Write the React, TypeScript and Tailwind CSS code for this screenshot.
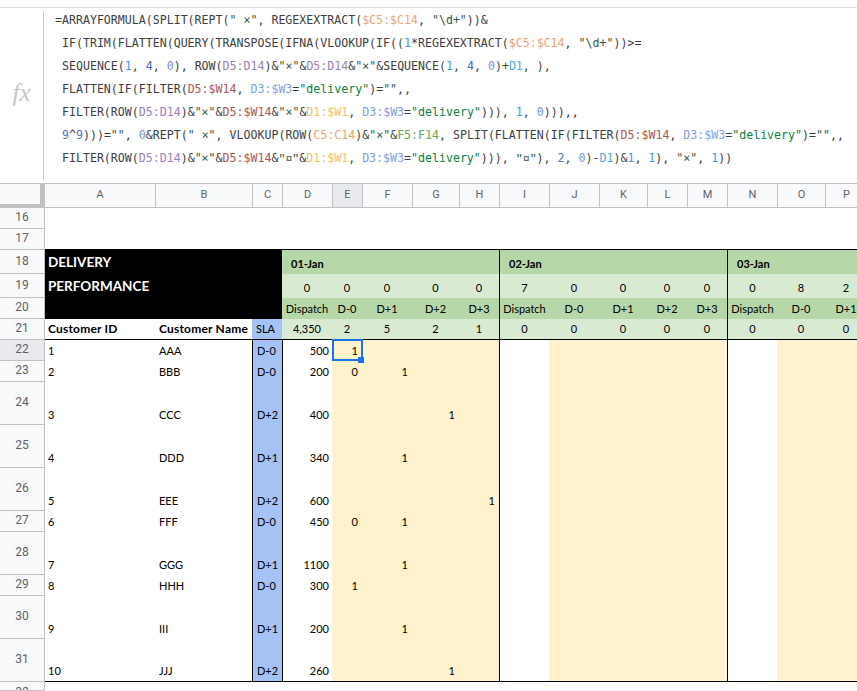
const headerColumns = ['A', 'B', 'C', 'D', 'E', 'F', 'G', 'H', 'I', 'J', 'K', 'L', 'M', 'N', 'O', 'P'];

const orange = 'text-[#f5a26f]';
const purple = 'text-[#9a80bd]';
const sky = 'text-[#56a7dc]';
const red = 'text-[#b0555a]';
const blue = 'text-[#7d9ff0]';
const amber = 'text-[#f3c267]';
const lime = 'text-[#6aa84f]';
const green = 'text-[#0b8043]';
const str = 'text-[#35594a]';
const box = "text-[#35594a] font-['Liberation_Mono',monospace]";
const n1 = 'text-[#3f9bd6]';
const n4 = 'text-[#4f63c6]';
const n0 = 'text-[#7f8fe0]';
const n2 = 'text-[#5b6fd0]';

type Token = string | [string, string];

const formula: Token[][] = [
  ['=ARRAYFORMULA(SPLIT(REPT(', ['" ×"', str], ', REGEXEXTRACT(', ['$C5:$C14', orange], ', ', ['"\\d+"', str], '))&'],
  [' IF(TRIM(FLATTEN(QUERY(TRANSPOSE(IFNA(VLOOKUP(IF((', ['1', n1], '*REGEXEXTRACT(', ['$C5:$C14', orange], ', ', ['"\\d+"', str], '))>='],
  [' SEQUENCE(', ['1', n1], ', ', ['4', n4], ', ', ['0', n0], '), ROW(', ['D5:D14', purple], ')&', ['"×"', str], '&', ['D5:D14', purple], '&', ['"×"', str], '&SEQUENCE(', ['1', n1], ', ', ['4', n4], ', ', ['0', n0], ')+', ['D1', sky], ', ),'],
  [' FLATTEN(IF(FILTER(', ['D5:$W14', red], ', ', ['D3:$W3', blue], '=', ['"delivery"', green], ')=', ['""', str], ',,'],
  [' FILTER(ROW(', ['D5:D14', purple], ')&', ['"×"', str], '&', ['D5:$W14', red], '&', ['"×"', str], '&', ['D1:$W1', amber], ', ', ['D3:$W3', blue], '=', ['"delivery"', green], '))), ', ['1', n1], ', ', ['0', n0], '))),,'],
  [' ', ['9', n2], '^', ['9', n2], ')))=', ['""', str], ', ', ['0', n0], '&REPT(', ['" ×"', str], ', VLOOKUP(ROW(', ['C5:C14', orange], ')&', ['"×"', str], '&', ['F5:F14', lime], ', SPLIT(FLATTEN(IF(FILTER(', ['D5:$W14', red], ', ', ['D3:$W3', blue], '=', ['"delivery"', green], ')=', ['""', str], ',,'],
  [' FILTER(ROW(', ['D5:D14', purple], ')&', ['"×"', str], '&', ['D5:$W14', red], '&', ['"¤"', box], '&', ['D1:$W1', amber], ', ', ['D3:$W3', blue], '=', ['"delivery"', green], '))), ', ['"¤"', box], '), ', ['2', n2], ', ', ['0', n0], ')-', ['D1', sky], ')&', ['1', n1], ', ', ['1', n1], '), ', ['"×"', str], ', ', ['1', n1], '))'],
];

type Row = {
  num: number;
  id: string;
  name: string;
  sla: string;
  dispatch: string;
  marks: Record<string, string>;
};

const rows: Row[] = [
  { num: 22, id: '1', name: 'AAA', sla: 'D-0', dispatch: '500', marks: { E: '1' } },
  { num: 23, id: '2', name: 'BBB', sla: 'D-0', dispatch: '200', marks: { E: '0', F: '1' } },
  { num: 24, id: '3', name: 'CCC', sla: 'D+2', dispatch: '400', marks: { G: '1' } },
  { num: 25, id: '4', name: 'DDD', sla: 'D+1', dispatch: '340', marks: { F: '1' } },
  { num: 26, id: '5', name: 'EEE', sla: 'D+2', dispatch: '600', marks: { H: '1' } },
  { num: 27, id: '6', name: 'FFF', sla: 'D-0', dispatch: '450', marks: { E: '0', F: '1' } },
  { num: 28, id: '7', name: 'GGG', sla: 'D+1', dispatch: '1100', marks: { F: '1' } },
  { num: 29, id: '8', name: 'HHH', sla: 'D-0', dispatch: '300', marks: { E: '1' } },
  { num: 30, id: '9', name: 'III', sla: 'D+1', dispatch: '200', marks: { F: '1' } },
  { num: 31, id: '10', name: 'JJJ', sla: 'D+2', dispatch: '260', marks: { G: '1' } },
];

// counters in rows 19 and 21, one per column from D to P
const row19 = ['0', '0', '0', '0', '0', '7', '0', '0', '0', '0', '0', '8', '2'];
const row20 = ['Dispatch', 'D-0', 'D+1', 'D+2', 'D+3', 'Dispatch', 'D-0', 'D+1', 'D+2', 'D+3', 'Dispatch', 'D-0', 'D+1'];
const row21 = ['4,350', '2', '5', '2', '1', '0', '0', '0', '0', '0', '0', '0', '0'];

function RowHead({ num, active, clip }: { num: number; active?: boolean; clip?: boolean }) {
  return (
    <div
      className={`flex justify-center border-r border-b border-[#c0c0c0] font-['Roboto',sans-serif] text-[12px] leading-4 text-[#5f6368] overflow-hidden ${clip ? 'items-start pt-[2px]' : 'items-center pb-[2px]'} ${active ? 'bg-[#e8eaed]' : 'bg-[#f8f9fa]'}`}
    >
      {num}
    </div>
  );
}

function SubRow({ values, tone, bottom }: { values: string[]; tone: string; bottom?: boolean }) {
  return (
    <>
      {values.map((value, i) => (
        <div
          key={i}
          className={`flex items-end justify-center pb-[2px] leading-4 whitespace-nowrap ${tone} ${i === 5 || i === 10 ? 'border-l border-black' : ''} ${bottom ? 'border-b border-black' : ''}`}
        >
          {value}
        </div>
      ))}
    </>
  );
}

function Mark({ value, last }: { value?: string; last: boolean }) {
  return (
    <div className={`flex items-end justify-end pb-[2px] pr-[4px] leading-4 bg-[#fff2cc] ${last ? 'border-b border-black' : ''}`}>
      {value}
    </div>
  );
}

export default function App() {
  return (
    <div className="w-[857px] h-[691px] overflow-hidden bg-white text-black font-['Lato',sans-serif] text-[11px]">
      <div className="h-[7px]" />

      {/* Formula bar */}
      <div className="flex h-[176px] border-t border-[#e0e0e0]">
        <div className="w-[43px] shrink-0 flex items-center justify-center pb-[6px] font-['Liberation_Serif',serif] italic text-[25px] text-[#c8c8c8]">
          fx
        </div>
        <div className="w-px shrink-0 h-[169px] mt-[3px] bg-[#c8c8c8]" />
        <div className="pl-[11px] pt-[1px] font-['DejaVu_Sans_Mono',monospace] text-[11.6px] leading-[23px] text-[#3c4043] whitespace-pre">
          {formula.map((line, i) => (
            <div key={i}>
              {line.map((token, j) =>
                typeof token === 'string' ? <span key={j}>{token}</span> : <span key={j} className={token[1]}>{token[0]}</span>
              )}
            </div>
          ))}
        </div>
      </div>

      {/* Sheet */}
      <div className="grid grid-cols-[45px_110px_97px_30px_50px_30px_50px_47px_40px_50px_50px_48px_40px_40px_50px_48px_42px] grid-rows-[25px_21px_21px_24px_24px_21px_21px_21px_21px_43px_43px_43px_21px_43px_21px_43px_43px_9px]">
        {/* Column headers */}
        <div className="relative bg-[#f8f9fa] border-t border-[#c0c0c0]">
          <div className="absolute right-0 top-0 bottom-0 w-[5px] bg-[#c0c0c0]" />
          <div className="absolute left-0 right-0 bottom-0 h-[4px] bg-[#c0c0c0]" />
        </div>
        {headerColumns.map((col, i) => (
          <div
            key={col}
            className={`flex items-center justify-center border-t border-b border-[#c0c0c0] font-['Roboto',sans-serif] text-[11px] text-[#5f6368] ${i > 0 ? 'border-l' : ''} ${col === 'E' ? 'bg-[#e8eaed]' : 'bg-[#f8f9fa]'}`}
          >
            {col}
          </div>
        ))}

        {/* Rows 16 and 17 */}
        <RowHead num={16} />
        <div className="col-span-16" />
        <RowHead num={17} />
        <div className="col-span-16 border-b border-black" />

        {/* Rows 18 to 21: title block and date groups */}
        <RowHead num={18} />
        <div className="col-span-3 row-span-3 bg-black pl-[3px] text-white font-bold text-[13.5px] leading-6">
          <div>DELIVERY</div>
          <div>PERFORMANCE</div>
        </div>
        <div className="col-span-5 flex items-end pb-[2px] pl-[9px] leading-4 font-bold bg-[#b6d7a8]">01-Jan</div>
        <div className="col-span-5 flex items-end pb-[2px] pl-[9px] leading-4 font-bold bg-[#b6d7a8] border-l border-black">02-Jan</div>
        <div className="col-span-3 flex items-end pb-[2px] pl-[9px] leading-4 font-bold bg-[#b6d7a8] border-l border-black">03-Jan</div>

        <RowHead num={19} />
        <SubRow values={row19} tone="bg-[#d9ead3]" />
        <RowHead num={20} />
        <SubRow values={row20} tone="bg-[#b6d7a8]" />

        <RowHead num={21} />
        <div className="flex items-end pb-[2px] pl-[3px] leading-4 font-bold text-[12px] tracking-[0.2px] border-b border-black">Customer ID</div>
        <div className="flex items-end pb-[2px] pl-[4px] leading-4 font-bold text-[12px] tracking-[0.2px] whitespace-nowrap border-b border-black">Customer Name</div>
        <div className="flex items-end pb-[2px] pl-[4px] leading-4 bg-[#a4c2f4] border-b border-black">SLA</div>
        <SubRow values={row21} tone="bg-[#d9ead3]" bottom />

        {/* Customer rows */}
        {rows.map((row, idx) => {
          const last = idx === rows.length - 1;
          const edge = last ? 'border-b border-black' : '';
          return (
            <div key={row.num} className="contents">
              <RowHead num={row.num} active={row.num === 22} />
              <div className={`flex items-end pb-[2px] pl-[3px] leading-4 ${edge}`}>{row.id}</div>
              <div className={`flex items-end pb-[2px] pl-[4px] leading-4 ${edge}`}>{row.name}</div>
              <div className={`flex items-end pb-[2px] pl-[4px] leading-4 bg-[#a4c2f4] border-l border-black ${edge}`}>{row.sla}</div>
              <div className={`flex items-end justify-end pb-[2px] pr-[3px] leading-4 border-l border-black ${edge}`}>{row.dispatch}</div>

              {/* E holds the selected cell on row 22 */}
              <div className={`relative flex items-end justify-end pb-[2px] pr-[4px] leading-4 bg-[#fff2cc] ${edge}`}>
                {row.marks.E}
                {row.num === 22 && (
                  <>
                    <div className="absolute -top-px left-0 w-[31px] h-[22px] border-2 border-[#1a73e8]" />
                    <div className="absolute z-10 top-[17px] left-[26px] w-[6px] h-[6px] bg-[#1a73e8]" />
                  </>
                )}
              </div>
              <Mark value={row.marks.F} last={last} />
              <Mark value={row.marks.G} last={last} />
              <Mark value={row.marks.H} last={last} />

              <div className={`border-l border-black ${edge}`} />
              <Mark last={last} />
              <Mark last={last} />
              <Mark last={last} />
              <Mark last={last} />

              <div className={`border-l border-black ${edge}`} />
              <Mark last={last} />
              <Mark last={last} />
            </div>
          );
        })}

        <RowHead num={32} clip />
      </div>
    </div>
  );
}
